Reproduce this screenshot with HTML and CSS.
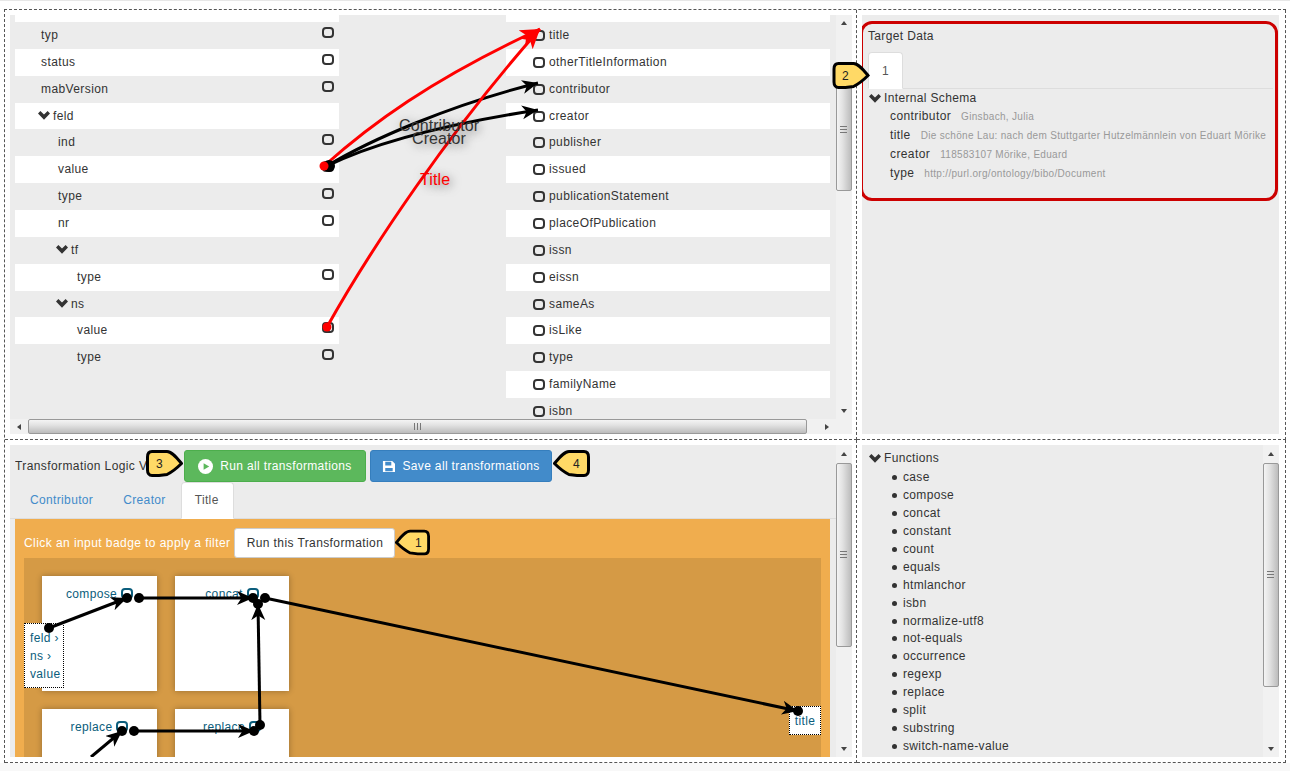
FILE: index.html
```html
<!DOCTYPE html>
<html lang="en">
<head>
    <meta charset="UTF-8">
    <meta name="viewport" content="width=device-width, initial-scale=1.0">
    <title>Transformation Editor</title>
    <link rel="stylesheet" href="styles.css">
</head>
<body>
    <svg class="defs" width="0" height="0">
        <symbol id="chevron" viewBox="0 0 12 9"><path d="M0 2.6 2.4 0 6 3.4 9.6 0 12 2.6 6 8.8Z"/></symbol>
        <symbol id="callout-shape" viewBox="0 0 37 27"><path d="M6 1.5H21C26 1.5 31 8 35.5 13.5 31 18 26 22 21 24.5L13 25.5H6C3 25.5 1.5 23 1.5 20V7C1.5 3.5 3 1.5 6 1.5Z"/></symbol>
        <defs>
            <marker id="head-red" markerUnits="userSpaceOnUse" markerWidth="22" markerHeight="18" refX="20" refY="8" orient="auto"><path d="M0 0 20 8 0 16 5 8Z" fill="#f00"/></marker>
            <marker id="head-black" markerUnits="userSpaceOnUse" markerWidth="18" markerHeight="16" refX="16" refY="7" orient="auto"><path d="M0 0 16 7 0 14 4.5 7Z" fill="#000"/></marker>
        </defs>
    </svg>

    <div class="page">
        <div class="workspace">

            <!-- mapping -->
            <section class="cell cell-mapper">
                <div class="panel mapper">
                    <div class="mapper-main">
                        <div class="mapper-cols">
                            <ul class="tree source">
                                <li class="row"></li>
                                <li class="row lvl1"><span>typ</span><i class="port"></i></li>
                                <li class="row lvl1"><span>status</span><i class="port"></i></li>
                                <li class="row lvl1"><span>mabVersion</span><i class="port"></i></li>
                                <li class="row lvl1 group"><svg class="chev"><use href="#chevron"/></svg><span>feld</span></li>
                                <li class="row lvl2"><span>ind</span><i class="port"></i></li>
                                <li class="row lvl2"><span>value</span><i class="port"></i></li>
                                <li class="row lvl2"><span>type</span><i class="port"></i></li>
                                <li class="row lvl2"><span>nr</span><i class="port"></i></li>
                                <li class="row lvl2 group"><svg class="chev"><use href="#chevron"/></svg><span>tf</span></li>
                                <li class="row lvl3"><span>type</span><i class="port"></i></li>
                                <li class="row lvl2 group"><svg class="chev"><use href="#chevron"/></svg><span>ns</span></li>
                                <li class="row lvl3"><span>value</span><i class="port"></i></li>
                                <li class="row lvl3"><span>type</span><i class="port"></i></li>
                            </ul>
                            <ul class="tree target">
                                <li class="row"></li>
                                <li class="row"><i class="port"></i><span>title</span></li>
                                <li class="row"><i class="port"></i><span>otherTitleInformation</span></li>
                                <li class="row"><i class="port"></i><span>contributor</span></li>
                                <li class="row"><i class="port"></i><span>creator</span></li>
                                <li class="row"><i class="port"></i><span>publisher</span></li>
                                <li class="row"><i class="port"></i><span>issued</span></li>
                                <li class="row"><i class="port"></i><span>publicationStatement</span></li>
                                <li class="row"><i class="port"></i><span>placeOfPublication</span></li>
                                <li class="row"><i class="port"></i><span>issn</span></li>
                                <li class="row"><i class="port"></i><span>eissn</span></li>
                                <li class="row"><i class="port"></i><span>sameAs</span></li>
                                <li class="row"><i class="port"></i><span>isLike</span></li>
                                <li class="row"><i class="port"></i><span>type</span></li>
                                <li class="row"><i class="port"></i><span>familyName</span></li>
                                <li class="row"><i class="port"></i><span>isbn</span></li>
                            </ul>
                        </div>
                        <svg class="wires" viewBox="10 15 826 404">
                            <path class="wire-black" d="M327 166C370 140 450 105 538 83" marker-end="url(#head-black)"/>
                            <path class="wire-black" d="M327 166C370 145 440 125 538 110" marker-end="url(#head-black)"/>
                            <path class="wire-red" d="M324 166C370 125 430 80 540 29" marker-end="url(#head-red)"/>
                            <path class="wire-red" d="M327 327C370 250 450 130 540 29" marker-end="url(#head-red)"/>
                            <circle cx="329" cy="166" r="6"/>
                            <circle cx="324" cy="166" r="4.5" fill="#f00"/>
                            <circle cx="327" cy="327" r="4.5" fill="#f00"/>
                        </svg>
                        <span class="wire-label label-contributor">Contributor</span>
                        <span class="wire-label label-creator">Creator</span>
                        <span class="wire-label label-title">Title</span>
                    </div>
                    <div class="vscroll vscroll-mapper">
                        <div class="sb-btn up"></div>
                        <div class="sb-thumb"></div>
                        <div class="sb-fill"></div>
                        <div class="sb-btn down"></div>
                    </div>
                    <div class="hscroll">
                        <div class="sb-btn left"></div>
                        <div class="sb-thumb"></div>
                        <div class="sb-btn right"></div>
                    </div>
                </div>
            </section>

            <!-- target data -->
            <section class="cell cell-side">
                <div class="panel target-data">
                    <div class="target-title">Target Data</div>
                    <div class="record-tabs"><span class="record-tab">1</span></div>
                    <div class="schema-head"><svg class="chev"><use href="#chevron"/></svg>Internal Schema</div>
                    <ul class="schema-list">
                        <li>contributor<small>Ginsbach, Julia</small></li>
                        <li>title<small>Die schöne Lau: nach dem Stuttgarter Hutzelmännlein von Eduart Mörike</small></li>
                        <li>creator<small>118583107 Mörike, Eduard</small></li>
                        <li>type<small>http://purl.org/ontology/bibo/Document</small></li>
                    </ul>
                    <div class="red-box"></div>
                </div>
            </section>

            <!-- transformation logic -->
            <section class="cell cell-mapper">
                <div class="panel logic">
                    <div class="logic-main">
                        <div class="logic-head">
                            <span class="logic-title">Transformation Logic View</span>
                            <button class="btn btn-green">
                                <svg class="btn-icon" viewBox="0 0 16 16"><circle cx="8" cy="8" r="8" fill="#fff"/><path d="M6 4.5 12 8 6 11.5Z" fill="#5cb85c"/></svg>
                                Run all transformations
                            </button>
                            <button class="btn btn-blue">
                                <svg class="btn-icon save" viewBox="0 0 14 14"><path fill="#fff" fill-rule="evenodd" d="M1 1H11L14 4V13H1ZM3.5 2V6H10V2ZM3.5 8.5V12H11.5V8.5Z"/></svg>
                                Save all transformations
                            </button>
                        </div>
                        <ul class="tabs">
                            <li>Contributor</li>
                            <li>Creator</li>
                            <li class="active">Title</li>
                        </ul>
                        <div class="tab-body">
                            <div class="tab-tools">
                                <span>Click an input badge to apply a filter</span>
                                <button class="btn btn-white">Run this Transformation</button>
                            </div>
                            <div class="canvas">
                                <div class="card"><div class="card-label">compose<i class="port teal"></i></div></div>
                                <div class="card"><div class="card-label">concat<i class="port teal"></i></div></div>
                                <div class="card"><div class="card-label">replace<i class="port teal"></i></div></div>
                                <div class="card"><div class="card-label">replace<i class="port teal"></i></div></div>
                                <div class="io io-input">feld ›<br>ns ›<br>value</div>
                                <div class="io io-output">title</div>
                            </div>
                        </div>
                        <svg class="wires" viewBox="10 445 826 312">
                            <g class="wire-flow">
                                <path d="M49 628 127 598" marker-end="url(#head-black)"/>
                                <path d="M139 598H253" marker-end="url(#head-black)"/>
                                <path d="M265 598 798 711" marker-end="url(#head-black)"/>
                                <path d="M260 725 258 604" marker-end="url(#head-black)"/>
                                <path d="M134 731H254" marker-end="url(#head-black)"/>
                                <path d="M91 757 122 731" marker-end="url(#head-black)"/>
                            </g>
                            <circle cx="49" cy="628" r="5"/>
                            <circle cx="127" cy="598" r="5"/>
                            <circle cx="139" cy="598" r="5"/>
                            <circle cx="253" cy="598" r="5"/>
                            <circle cx="265" cy="598" r="5"/>
                            <circle cx="258" cy="604" r="5"/>
                            <circle cx="260" cy="725" r="5"/>
                            <circle cx="254" cy="731" r="5"/>
                            <circle cx="134" cy="731" r="5"/>
                            <circle cx="122" cy="731" r="5"/>
                            <circle cx="798" cy="711" r="5"/>
                        </svg>
                    </div>
                    <div class="vscroll vscroll-logic">
                        <div class="sb-btn up"></div>
                        <div class="sb-thumb"></div>
                        <div class="sb-fill"></div>
                        <div class="sb-btn down"></div>
                    </div>
                </div>
            </section>

            <!-- functions -->
            <section class="cell cell-side">
                <div class="panel functions">
                    <div class="functions-main">
                        <div class="schema-head"><svg class="chev"><use href="#chevron"/></svg>Functions</div>
                        <ul class="function-list">
                            <li>case</li>
                            <li>compose</li>
                            <li>concat</li>
                            <li>constant</li>
                            <li>count</li>
                            <li>equals</li>
                            <li>htmlanchor</li>
                            <li>isbn</li>
                            <li>normalize-utf8</li>
                            <li>not-equals</li>
                            <li>occurrence</li>
                            <li>regexp</li>
                            <li>replace</li>
                            <li>split</li>
                            <li>substring</li>
                            <li>switch-name-value</li>
                        </ul>
                    </div>
                    <div class="vscroll vscroll-functions">
                        <div class="sb-btn up"></div>
                        <div class="sb-thumb"></div>
                        <div class="sb-fill"></div>
                        <div class="sb-btn down"></div>
                    </div>
                </div>
            </section>
        </div>

        <div class="callout callout-1 flip"><svg><use href="#callout-shape"/></svg><b>1</b></div>
        <div class="callout callout-2"><svg><use href="#callout-shape"/></svg><b>2</b></div>
        <div class="callout callout-3"><svg><use href="#callout-shape"/></svg><b>3</b></div>
        <div class="callout callout-4 flip"><svg><use href="#callout-shape"/></svg><b>4</b></div>
    </div>
</body>
</html>
```

FILE: styles.css
```css
* {
    box-sizing: border-box;
}
html, body {
    margin: 0;
    height: 100%;
    overflow: hidden;
}
body {
    background-color: #f8f8f8;
    color: #333;
    font-family: "Liberation Sans", Arial, sans-serif;
    font-size: 12px;
    letter-spacing: 0.35px;
}
ul {
    list-style: none;
    margin: 0;
    padding: 0;
}
.defs {
    position: absolute;
}
.page {
    position: relative;
    height: 763px;
    background-color: #fff;
    border-top: 1px solid #e7e7e7;
    padding: 8px 4px 0;
}

/* four dashed cells */
.workspace {
    display: grid;
    grid-template-columns: 852px 429px;
    grid-template-rows: 430px 323px;
    width: 1282px;
    height: 754px;
    border-top: 1px dashed #555;
    border-left: 1px dashed #555;
}
.cell {
    padding: 5px;
    border-right: 1px dashed #555;
    border-bottom: 1px dashed #555;
    min-width: 0;
    min-height: 0;
}
.cell-mapper {
    padding-right: 4px;
}
.cell-side {
    padding-right: 6px;
}
.panel {
    position: relative;
    height: 100%;
    background-color: #ececec;
    overflow: hidden;
}

/* mapping panel */
.mapper {
    display: grid;
    grid-template-columns: 826px 16px;
    grid-template-rows: 404px 15px;
}
.mapper-main {
    position: relative;
    overflow: hidden;
}
.mapper-cols {
    display: flex;
    justify-content: space-between;
    padding: 0 6px 0 5px;
    letter-spacing: 0.4px;
}
.tree {
    width: 324px;
}
.row {
    position: relative;
    display: flex;
    align-items: center;
    height: 26.86px;
    padding-bottom: 1px;
    background-color: #fff;
}
.row:first-child {
    height: 7px;
}
.row:nth-child(even) {
    background-color: #ececec;
}
.tree.source .lvl1 {
    padding-left: 26px;
}
.tree.source .lvl2 {
    padding-left: 43px;
}
.tree.source .lvl3 {
    padding-left: 62px;
}
.tree.source .group {
    padding-left: 23px;
}
.tree.source .lvl2.group {
    padding-left: 41px;
}
.tree.source .port {
    position: absolute;
    right: 5px;
    top: 5px;
}
.tree.source .row:last-child {
    background-color: #ececec;
}
.tree.target .row {
    padding-left: 27px;
}
.tree.target .port {
    margin-right: 4px;
    margin-top: 1px;
}
.port {
    display: inline-block;
    flex: none;
    width: 12px;
    height: 11px;
    border: 2px solid #333;
    border-radius: 4px;
}
.port.teal {
    border-color: #0b5d7c;
    margin-left: 4px;
    margin-top: -2px;
}
.chev {
    flex: none;
    width: 12px;
    height: 9px;
    margin-right: 3px;
    fill: #333;
}

/* connector overlays */
.wires {
    position: absolute;
    top: 0;
    left: 0;
    width: 826px;
    height: 404px;
    pointer-events: none;
}
.wires path {
    fill: none;
}
.wire-black {
    stroke: #000;
    stroke-width: 3;
}
.wire-red {
    stroke: #f00;
    stroke-width: 3;
}
.wires .wire-flow path {
    stroke: #000;
    stroke-width: 3;
}
.wire-label {
    position: absolute;
    font-size: 16px;
    letter-spacing: 0.1px;
    text-shadow: 2px 2px 10px rgba(0, 0, 0, 0.5);
    line-height: 18px;
    white-space: nowrap;
}
.label-contributor {
    left: 389px;
    top: 102px;
}
.label-creator {
    left: 402px;
    top: 115px;
}
.label-title {
    left: 410px;
    top: 156px;
    color: #f00;
}

/* scrollbars */
.vscroll {
    display: flex;
    flex-direction: column;
    width: 16px;
    height: 100%;
    background-color: #f1f1f1;
}
.sb-btn {
    flex: none;
    display: flex;
    align-items: center;
    justify-content: center;
    height: 16px;
}
.sb-btn::after {
    content: "";
    border: 3.5px solid transparent;
}
.sb-btn.up::after {
    border-top-width: 0;
    border-bottom: 4px solid #444;
}
.sb-btn.down::after {
    border-bottom-width: 0;
    border-top: 4px solid #444;
}
.sb-btn.left::after {
    border-left-width: 0;
    border-right: 4px solid #444;
}
.sb-btn.right::after {
    border-right-width: 0;
    border-left: 4px solid #444;
}
.sb-fill {
    flex: 1;
}
.sb-thumb {
    flex: none;
    position: relative;
    border: 1px solid #999;
    border-radius: 2px;
    background: linear-gradient(to right, #f4f4f4, #e2e2e2 40%, #bcbcbc);
}
.sb-thumb::after {
    content: "";
    position: absolute;
    top: 50%;
    left: 50%;
    width: 7px;
    height: 7px;
    margin: -4px 0 0 -4px;
    background: repeating-linear-gradient(to bottom, #777 0 1px, transparent 1px 3px);
}
.vscroll-mapper .sb-thumb {
    margin-top: 38px;
    height: 122px;
}
.vscroll-logic .sb-btn.up,
.vscroll-functions .sb-btn.up {
    height: 18px;
}
.vscroll-logic .sb-thumb {
    height: 184px;
}
.vscroll-functions .sb-thumb {
    height: 224px;
}
.hscroll {
    grid-column: 1 / 3;
    display: flex;
    height: 15px;
    background-color: #f1f1f1;
}
.hscroll .sb-btn {
    width: 18px;
    height: 15px;
}
.hscroll .sb-thumb {
    width: 779px;
    background: linear-gradient(to bottom, #f4f4f4, #e2e2e2 40%, #bcbcbc);
}
.hscroll .sb-thumb::after {
    width: 7px;
    height: 7px;
    margin: -4px 0 0 -4px;
    background: repeating-linear-gradient(to right, #777 0 1px, transparent 1px 3px);
}
.hscroll .sb-btn.right {
    width: 40px;
}

/* target data */
.target-data {
    padding: 13px 6px 0;
}
.target-title {
    line-height: 16px;
}
.record-tabs {
    display: flex;
    margin-top: 8px;
    border-bottom: 1px solid #ddd;
    width: 405px;
}
.record-tab {
    display: flex;
    align-items: center;
    justify-content: center;
    width: 35px;
    height: 37px;
    margin-bottom: -1px;
    background-color: #fff;
    border: 1px solid #ddd;
    border-bottom-color: #fff;
    border-radius: 4px 4px 0 0;
    color: #555;
}
.schema-head {
    display: flex;
    align-items: center;
    line-height: 18px;
    padding-left: 1px;
}
.schema-list {
    padding-left: 22px;
    letter-spacing: 0.4px;
}
.schema-list li {
    line-height: 18px;
    white-space: nowrap;
}
.schema-list small {
    margin-left: 10px;
    font-size: 10px;
    letter-spacing: 0.31px;
    color: #999;
}
.red-box {
    position: absolute;
    left: -2px;
    top: 6px;
    width: 418px;
    height: 180px;
    border: 3px solid #c00;
    border-radius: 12px;
}

/* transformation logic */
.logic {
    display: grid;
    grid-template-columns: 826px 16px;
}
.logic-main {
    position: relative;
    overflow: hidden;
    height: 312px;
}
.logic-main .wires {
    height: 312px;
}
.logic-head {
    display: flex;
    align-items: center;
    gap: 4px;
    height: 37px;
    padding: 5px 0 0 5px;
}
.logic-title {
    width: 165px;
    white-space: nowrap;
    overflow: hidden;
    letter-spacing: 0.4px;
}
.btn {
    display: inline-flex;
    align-items: center;
    justify-content: center;
    height: 32px;
    width: 182px;
    padding: 0;
    border: 1px solid transparent;
    border-radius: 3px;
    font-family: inherit;
    font-size: 12px;
    letter-spacing: 0.35px;
    color: #fff;
}
.btn-green {
    background-color: #5cb85c;
    border-color: #4cae4c;
}
.btn-blue {
    background-color: #428bca;
    border-color: #357ebd;
}
.btn-white {
    width: 161px;
    height: 30px;
    background-color: #fff;
    border-color: #ccc;
    color: #333;
    letter-spacing: 0.4px;
}
.btn-icon {
    width: 15px;
    height: 15px;
    margin-right: 7px;
}
.btn-icon.save {
    width: 13px;
    height: 13px;
}
.tabs {
    display: flex;
    height: 37px;
    padding-left: 5px;
    border-bottom: 1px solid #ddd;
}
.tabs li {
    display: flex;
    align-items: center;
    height: 37px;
    padding: 0 15px 2px;
    color: #428bca;
}
.tabs li.active {
    padding: 0 14px 2px 13px;
    color: #555;
    background-color: #fff;
    border: 1px solid #ddd;
    border-bottom-color: #fff;
    border-radius: 4px 4px 0 0;
}
.tab-body {
    width: 815px;
    margin-left: 5px;
    height: 238px;
    padding: 8px 9px 0;
    background-color: #f0ad4e;
}
.tab-tools {
    display: flex;
    align-items: center;
    gap: 4px;
    height: 31px;
    color: #fff;
    letter-spacing: 0.43px;
}
.canvas {
    position: relative;
    display: grid;
    grid-template-columns: 115px 114px;
    grid-auto-rows: 115px;
    gap: 18px;
    width: 797px;
    height: 199px;
    padding: 18px;
    overflow: hidden;
    background-color: #d59a45;
}
.card {
    background-color: #fff;
    box-shadow: 0 0 6px rgba(0, 0, 0, 0.3);
}
.card-label {
    display: flex;
    align-items: center;
    justify-content: center;
    margin-top: 10px;
    line-height: 16px;
    color: #0b5d7c;
}
.io {
    position: absolute;
    background-color: #fff;
    border: 1px dotted #000;
    color: #0b5d7c;
    line-height: 18px;
}
.io-input {
    left: 0;
    top: 65px;
    width: 40px;
    height: 65px;
    padding: 5px 0 0 5px;
}
.io-output {
    right: 0;
    top: 148px;
    width: 32px;
    height: 29px;
    padding-top: 5px;
    text-align: center;
}

/* functions */
.functions {
    display: grid;
    grid-template-columns: 401px 16px;
}
.functions-main {
    padding-top: 4px;
    overflow: hidden;
}
.functions-main .schema-head {
    padding-left: 7px;
    margin-bottom: 1px;
}
.function-list {
    padding-left: 41px;
}
.function-list li {
    position: relative;
    height: 17.95px;
    line-height: 18px;
}
.function-list li::before {
    content: "";
    position: absolute;
    left: -11px;
    top: 7px;
    width: 5px;
    height: 5px;
    border-radius: 50%;
    background-color: #333;
}

/* numbered callouts */
.callout {
    position: absolute;
    display: flex;
    align-items: center;
    width: 37px;
    height: 27px;
    font-size: 12px;
    color: #222;
}
.callout svg {
    position: absolute;
    left: 0;
    top: 0;
    width: 100%;
    height: 100%;
    fill: #ffd966;
    stroke: #000;
    stroke-width: 3;
}
.callout b {
    position: relative;
    font-weight: normal;
    margin-left: 10px;
}
.callout.flip svg {
    transform: scaleX(-1);
}
.callout.flip b {
    margin-left: 20px;
}
.callout-1 {
    left: 395px;
    top: 528px;
    width: 35px;
}
.callout-2 {
    left: 832px;
    top: 61px;
    width: 38px;
}
.callout-3 {
    left: 146px;
    top: 449px;
}
.callout-4 {
    left: 553px;
    top: 449px;
}
```
